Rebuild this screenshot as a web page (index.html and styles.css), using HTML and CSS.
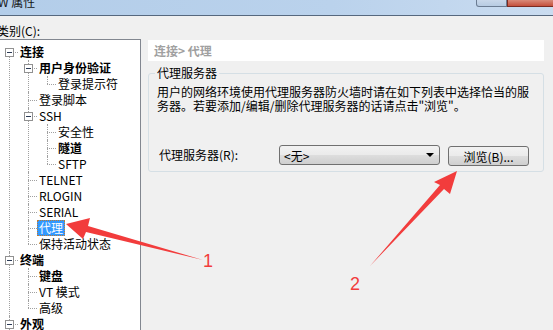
FILE: index.html
```html
<!DOCTYPE html>
<html lang="zh-CN">

<head>
  <meta charset="UTF-8" />
  <title>W 属性</title>
  <link rel="stylesheet" href="styles.css">
</head>

<body>
  <div class="titlebar">
    <div class="title">W 属性</div>
    <div class="win-btns">
      <div class="btn-max"></div>
      <div class="btn-close"></div>
    </div>
  </div>

  <div class="dialog">
    <div class="left-col">
      <div class="cat-label">类别(C):</div>
      <div class="tree-box">
        <ul class="tree">
          <li class="first"><span class="tog"></span><span class="lbl bold">连接</span>
            <ul>
              <li><span class="tog"></span><span class="lbl bold">用户身份验证</span>
                <ul>
                  <li><span class="lbl">登录提示符</span></li>
                </ul>
              </li>
              <li><span class="lbl">登录脚本</span></li>
              <li><span class="tog"></span><span class="lbl">SSH</span>
                <ul>
                  <li><span class="lbl">安全性</span></li>
                  <li><span class="lbl bold">隧道</span></li>
                  <li><span class="lbl">SFTP</span></li>
                </ul>
              </li>
              <li><span class="lbl">TELNET</span></li>
              <li><span class="lbl">RLOGIN</span></li>
              <li><span class="lbl">SERIAL</span></li>
              <li><span class="lbl selected">代理</span></li>
              <li><span class="lbl">保持活动状态</span></li>
            </ul>
          </li>
          <li><span class="tog"></span><span class="lbl bold">终端</span>
            <ul>
              <li><span class="lbl bold">键盘</span></li>
              <li><span class="lbl">VT 模式</span></li>
              <li><span class="lbl">高级</span></li>
            </ul>
          </li>
          <li class="more"><span class="tog"></span><span class="lbl bold">外观</span></li>
        </ul>
      </div>
    </div>

    <div class="right-col">
      <div class="crumb">连接&gt; 代理</div>
      <fieldset class="group">
        <legend>代理服务器</legend>
        <p class="desc">用户的网络环境使用代理服务器防火墙时请在如下列表中选择恰当的服务器。若要添加/编辑/删除代理服务器的话请点击"浏览"。</p>
        <div class="proxy-row">
          <label for="proxySelect">代理服务器(R):</label>
          <div class="combo" id="proxySelect">
            <span>&lt;无&gt;</span>
            <span class="caret"></span>
          </div>
          <button class="browse">浏览(B)...</button>
        </div>
      </fieldset>
    </div>
  </div>

  <!-- annotation arrows drawn over the dialog -->
  <svg class="marks" width="553" height="330" viewBox="0 0 553 330">
    <polygon points="66,224 90,218 88,226 203,260 86,232 83,239" />
    <polygon points="457,171 450,194 444,189 370,266 440,185 434,182" />
    <text x="208" y="267">1</text>
    <text x="355" y="290">2</text>
  </svg>
</body>

</html>
```

FILE: styles.css
```css
body {
  margin: 0;
  width: 553px;
  height: 330px;
  overflow: hidden;
  position: relative;
  background-color: #f0f0f0;
  font-family: "Noto Sans CJK SC", "Liberation Sans", sans-serif;
  font-size: 12px;
  color: #000;
}

.titlebar {
  height: 15px;
  border-bottom: 1px solid #56687e;
  background: linear-gradient(to right, #b3cde9, #bad2ec 60%, #cadcf0);
  display: flex;
  justify-content: space-between;
  align-items: flex-start;
  overflow: hidden;
}

.title {
  margin: -4px 0 0 -2px;
  line-height: 12px;
  color: #151515;
}

.win-btns {
  display: flex;
  margin-right: -12px;
}

.btn-max {
  width: 29px;
  height: 6px;
  border: 1px solid #6b7c92;
  border-top: none;
  border-radius: 0 0 0 3px;
  background: linear-gradient(#c9d8ea, #b7cbe2);
}

.btn-close {
  width: 56px;
  height: 6px;
  border: 1px solid #7b2b22;
  border-top: none;
  border-radius: 0 0 3px 0;
  background: linear-gradient(#d98a79, #c4503c);
}

.dialog {
  display: flex;
  gap: 7px;
}

.left-col {
  width: 144px;
  margin-left: -3px;
}

.cat-label {
  margin-top: 7px;
  line-height: 16px;
}

.tree-box {
  height: 300px;
  background: #fff;
  border: 1px solid #828790;
  padding: 4px 0 0 3px;
}

.tree,
.tree ul {
  margin: 0;
  padding: 0;
  list-style: none;
}

.tree ul {
  margin-left: 2px;
}

.tree li {
  position: relative;
  padding-left: 17px;
  line-height: 16px;
}

.tree li::before {
  content: "";
  position: absolute;
  left: 8px;
  top: 8px;
  width: 9px;
  border-top: 1px dotted #a0a0a0;
}

.tree li::after {
  content: "";
  position: absolute;
  left: 8px;
  top: 0;
  bottom: 0;
  border-left: 1px dotted #a0a0a0;
}

.tree li:last-child::after {
  bottom: auto;
  height: 8px;
}

.tree li.first::after {
  top: 8px;
}

.tree li.more::after {
  bottom: -10px;
  height: auto;
}

.tog {
  position: absolute;
  left: 4px;
  top: 4px;
  width: 7px;
  height: 7px;
  border: 1px solid #919191;
  background: #fff;
  z-index: 1;
}

.tog::before {
  content: "";
  position: absolute;
  left: 1px;
  top: 3px;
  width: 5px;
  height: 1px;
  background: #2b3a55;
}

.lbl {
  display: inline-block;
  padding: 0 2px;
  height: 16px;
  white-space: nowrap;
}

.bold {
  font-weight: bold;
}

.selected {
  background: #3399ff;
  color: #fff;
  outline: 1px dotted #c07a30;
  outline-offset: -1px;
}

.right-col {
  width: 396px;
}

.crumb {
  margin-top: 24px;
  height: 21px;
  line-height: 21px;
  padding-left: 6px;
  background: #fff;
  color: #a0a0a0;
  font-weight: bold;
}

.group {
  margin: 4px 0 0;
  padding: 0 6px 5px 8px;
  border: 1px solid #d5dfe5;
  border-radius: 3px;
}

.group legend {
  padding: 0 2px;
  margin-left: -2px;
  line-height: 16px;
}

.desc {
  margin: 4px 0 0;
  line-height: 14px;
}

.proxy-row {
  display: flex;
  align-items: flex-start;
  margin-top: 32px;
}

.proxy-row label {
  width: 120px;
  margin-left: 2px;
  line-height: 20px;
}

.combo,
.browse {
  box-sizing: border-box;
  height: 20px;
  border: 1px solid #707070;
  border-radius: 3px;
  background: linear-gradient(#f2f2f2 0%, #ebebeb 48%, #dddddd 52%, #cfcfcf 100%);
  font-family: inherit;
  font-size: 12px;
  color: #000;
}

.combo {
  width: 161px;
  display: flex;
  justify-content: space-between;
  align-items: center;
  padding: 0 5px 0 4px;
}

.caret {
  width: 0;
  height: 0;
  border-left: 4px solid transparent;
  border-right: 4px solid transparent;
  border-top: 4px solid #000;
}

.browse {
  width: 81px;
  margin: 1px 0 0 8px;
  padding: 0;
}

.marks {
  position: absolute;
  top: 0;
  left: 0;
  pointer-events: none;
}

.marks polygon {
  fill: #f23c3c;
}

.marks text {
  fill: #f23c3c;
  font-family: "Liberation Sans", sans-serif;
  font-size: 18px;
  text-anchor: middle;
}
```
